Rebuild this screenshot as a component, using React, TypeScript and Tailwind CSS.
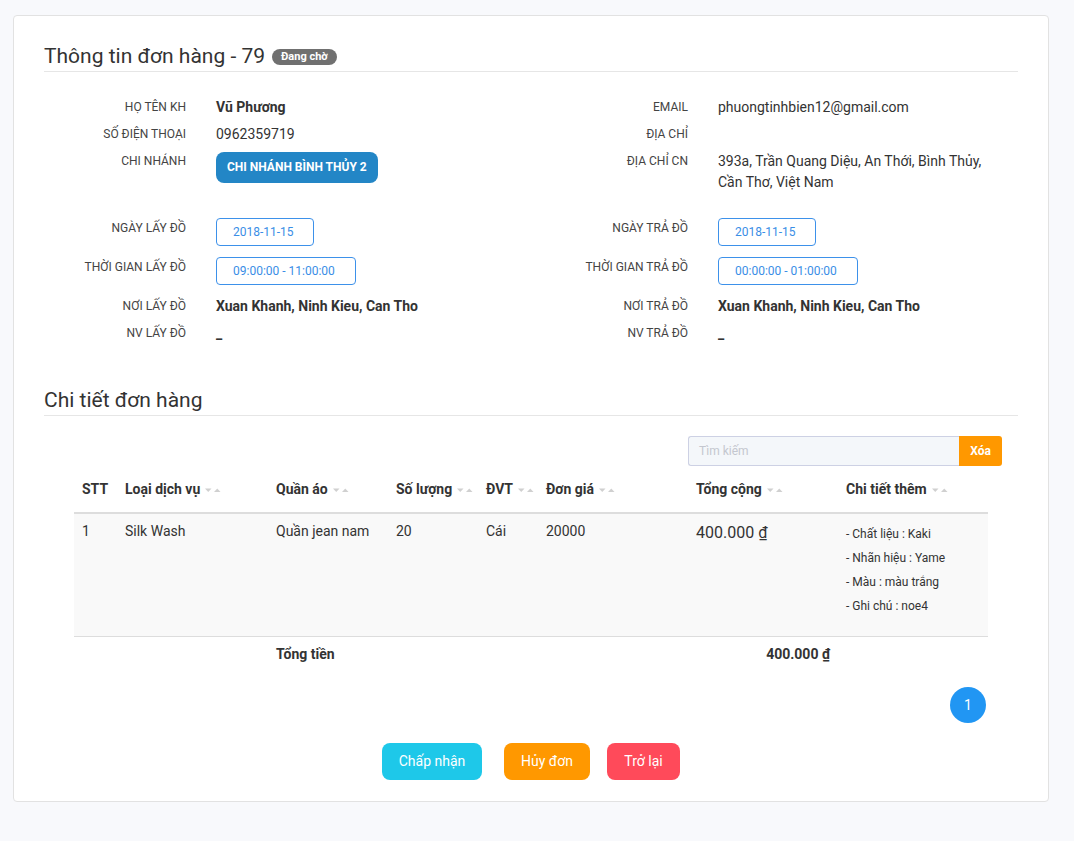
import React from "react";

const Sort = () => (
  <svg width="16" height="6" viewBox="0 0 16 6" className="inline-block ml-[5px] align-middle">
    <path d="M0 1.5h6.5L3.25 5z" fill="#d0d0d0" />
    <path d="M9 5h6.5L12.25 1.5z" fill="#d0d0d0" />
  </svg>
);

function Field({ label, children, valueClass = "" }: { label: string; children?: React.ReactNode; valueClass?: string }) {
  return (
    <div className="flex items-start">
      <div className="w-[142px] shrink-0 text-right text-[12px] leading-[21px] uppercase text-[#444]">{label}</div>
      <div className={"ml-[30px] text-[14px] leading-[21px] text-[#333] " + valueClass}>{children}</div>
    </div>
  );
}

const Box = ({ children, w }: { children: React.ReactNode; w: string }) => (
  <div className={"flex h-[28px] items-center rounded-[4px] border border-[#3d91ea] pl-[16px] text-[12px] text-[#3a8ee6] " + w}>
    {children}
  </div>
);

const th = "px-2 py-3 text-left text-[14px] font-bold leading-[21px] whitespace-nowrap";

export default function App() {
  return (
    <div
      className="min-h-screen bg-[#f8f9fc] pt-[15px] pl-[13px] pb-[40px]"
      style={{ fontFamily: "Roboto, 'Noto Sans', sans-serif" }}
    >
      <div className="w-[1036px] rounded-[4px] border border-[#e2e2e2] bg-white px-[30px] pt-[26px] pb-[21px]">
        <div className="flex items-center border-b border-[#e6e6e6] pb-[1px]">
          <h2 className="text-[21px] leading-[28px] text-[#333]">Thông tin đơn hàng - 79</h2>
          <span className="ml-[7px] mt-[2px] inline-flex h-[16px] items-center rounded-full bg-[#707070] px-[9px] text-[11px] font-bold text-white">
            Đang chờ
          </span>
        </div>

        <div className="mt-[25px]">
          <div className="grid grid-cols-2 gap-x-[30px]">
            <Field label="Họ tên KH" valueClass="font-bold">Vũ Phương</Field>
            <Field label="Email">phuongtinhbien12@gmail.com</Field>
          </div>
          <div className="mt-[6px] grid grid-cols-2 gap-x-[30px]">
            <Field label="Số điện thoại">0962359719</Field>
            <Field label="Địa chỉ"></Field>
          </div>
          <div className="mt-[6px] grid grid-cols-2 gap-x-[30px]">
            <Field label="Chi nhánh">
              <div className="mt-[1px] inline-flex h-[31px] items-center rounded-[8px] bg-[#2386c6] px-[11px] text-[12px] font-bold uppercase text-white">
                Chi nhánh Bình Thủy 2
              </div>
            </Field>
            <Field label="Địa chỉ CN" valueClass="max-w-[280px]">
              393a, Trần Quang Diệu, An Thới, Bình Thủy, Cần Thơ, Việt Nam
            </Field>
          </div>
          <div className="mt-[25px] grid grid-cols-2 gap-x-[30px]">
            <Field label="Ngày lấy đồ"><Box w="w-[98px]">2018-11-15</Box></Field>
            <Field label="Ngày trả đồ"><Box w="w-[98px]">2018-11-15</Box></Field>
          </div>
          <div className="mt-[11px] grid grid-cols-2 gap-x-[30px]">
            <Field label="Thời gian lấy đồ"><Box w="w-[140px]">09:00:00 - 11:00:00</Box></Field>
            <Field label="Thời gian trả đồ"><Box w="w-[140px]">00:00:00 - 01:00:00</Box></Field>
          </div>
          <div className="mt-[11px] grid grid-cols-2 gap-x-[30px]">
            <Field label="Nơi lấy đồ" valueClass="font-bold">Xuan Khanh, Ninh Kieu, Can Tho</Field>
            <Field label="Nơi trả đồ" valueClass="font-bold">Xuan Khanh, Ninh Kieu, Can Tho</Field>
          </div>
          <div className="mt-[6px] grid grid-cols-2 gap-x-[30px]">
            <Field label="NV lấy đồ" valueClass="font-bold">_</Field>
            <Field label="NV trả đồ" valueClass="font-bold">_</Field>
          </div>
        </div>

        <div className="mt-[42px] border-b border-[#e6e6e6] pb-[1px]">
          <h2 className="text-[21px] leading-[28px] text-[#333]">Chi tiết đơn hàng</h2>
        </div>

        <div className="mt-[20px] flex justify-end pr-[16px]">
          <div className="flex h-[30px]">
            <div className="flex w-[271px] items-center rounded-l-[3px] border border-r-0 border-[#cdd1e4] bg-[#f4f7fa] px-[10px] text-[12px] text-[#c4c7cf]">
              Tìm kiếm
            </div>
            <div className="flex w-[43px] items-center justify-center rounded-r-[3px] bg-[#ff9800] text-[12px] font-bold text-white">
              Xóa
            </div>
          </div>
        </div>

        <div className="mx-[30px] mt-[1px]">
          <table className="w-[914px] table-fixed border-collapse text-[#333]">
            <colgroup>
              <col className="w-[43px]" />
              <col className="w-[151px]" />
              <col className="w-[120px]" />
              <col className="w-[90px]" />
              <col className="w-[60px]" />
              <col className="w-[150px]" />
              <col className="w-[150px]" />
              <col className="w-[150px]" />
            </colgroup>
            <thead>
              <tr className="border-b-2 border-[#dddddd]">
                <th className={th}>STT</th>
                <th className={th}>Loại dịch vụ<Sort /></th>
                <th className={th}>Quần áo<Sort /></th>
                <th className={th}>Số lượng<Sort /></th>
                <th className={th}>ĐVT<Sort /></th>
                <th className={th}>Đơn giá<Sort /></th>
                <th className={th}>Tổng cộng<Sort /></th>
                <th className={th}>Chi tiết thêm<Sort /></th>
              </tr>
            </thead>
            <tbody>
              <tr className="border-b border-[#dddddd] bg-[#f9f9f9] align-top text-[14px] leading-[18px]">
                <td className="px-2 pt-[8px]">1</td>
                <td className="px-2 pt-[8px]">Silk Wash</td>
                <td className="px-2 pt-[8px]">Quần jean nam</td>
                <td className="px-2 pt-[8px]">20</td>
                <td className="px-2 pt-[8px]">Cái</td>
                <td className="px-2 pt-[8px]">20000</td>
                <td className="px-2 pt-[8px] text-[16px] leading-[22px]">400.000 ₫</td>
                <td className="px-2 pt-[8px] pb-[18px] text-[12px] leading-[24px]">
                  <div>- Chất liệu : Kaki</div>
                  <div>- Nhãn hiệu : Yame</div>
                  <div>- Màu : màu trắng</div>
                  <div>- Ghi chú : noe4</div>
                </td>
              </tr>
              <tr className="text-[14px] font-bold leading-[21px]">
                <td className="px-2 pt-[7px] pb-[6px]"></td>
                <td className="px-2 pt-[7px] pb-[6px]"></td>
                <td className="px-2 pt-[7px] pb-[6px]">Tổng tiền</td>
                <td className="px-2 pt-[7px] pb-[6px]"></td>
                <td className="px-2 pt-[7px] pb-[6px]"></td>
                <td className="px-2 pt-[7px] pb-[6px]"></td>
                <td className="px-2 pt-[7px] pb-[6px] text-right">400.000 ₫</td>
                <td className="px-2 pt-[7px] pb-[6px]"></td>
              </tr>
            </tbody>
          </table>
        </div>

        <div className="mt-[16px] flex justify-end pr-[32px]">
          <div className="flex h-[36px] w-[36px] items-center justify-center rounded-full bg-[#2196f3] text-[14px] text-white">
            1
          </div>
        </div>

        <div className="mt-[20px] flex justify-center">
          <button className="mr-[22px] flex h-[37px] w-[100px] items-center justify-center rounded-[8px] bg-[#1ec8e9] text-[14px] text-white">
            Chấp nhận
          </button>
          <button className="mr-[17px] flex h-[37px] w-[86px] items-center justify-center rounded-[8px] bg-[#ff9800] text-[14px] text-white">
            Hủy đơn
          </button>
          <button className="flex h-[37px] w-[73px] items-center justify-center rounded-[8px] bg-[#ff4a5a] text-[14px] text-white">
            Trở lại
          </button>
        </div>
      </div>
    </div>
  );
}
